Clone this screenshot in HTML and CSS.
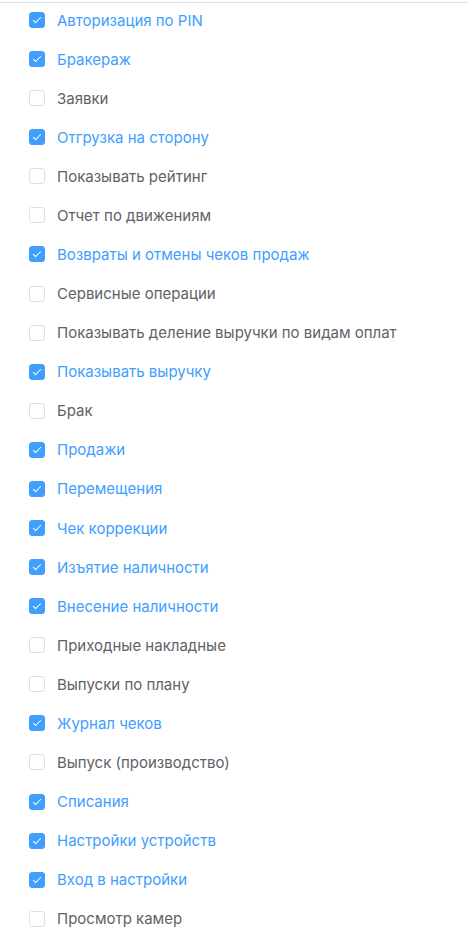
FILE: index.html
```html
<!DOCTYPE html>
<html lang="ru">
<head>
<meta charset="utf-8">
<link rel="stylesheet" href="styles.css">
</head>
<body>
<div class="panel">
  <ul class="list">
    <li class="item checked"><span class="box"></span><span class="label">Авторизация по PIN</span></li>
    <li class="item checked"><span class="box"></span><span class="label">Бракераж</span></li>
    <li class="item"><span class="box"></span><span class="label">Заявки</span></li>
    <li class="item checked"><span class="box"></span><span class="label">Отгрузка на сторону</span></li>
    <li class="item"><span class="box"></span><span class="label">Показывать рейтинг</span></li>
    <li class="item"><span class="box"></span><span class="label">Отчет по движениям</span></li>
    <li class="item checked"><span class="box"></span><span class="label">Возвраты и отмены чеков продаж</span></li>
    <li class="item"><span class="box"></span><span class="label">Сервисные операции</span></li>
    <li class="item"><span class="box"></span><span class="label">Показывать деление выручки по видам оплат</span></li>
    <li class="item checked"><span class="box"></span><span class="label">Показывать выручку</span></li>
    <li class="item"><span class="box"></span><span class="label">Брак</span></li>
    <li class="item checked"><span class="box"></span><span class="label">Продажи</span></li>
    <li class="item checked"><span class="box"></span><span class="label">Перемещения</span></li>
    <li class="item checked"><span class="box"></span><span class="label">Чек коррекции</span></li>
    <li class="item checked"><span class="box"></span><span class="label">Изъятие наличности</span></li>
    <li class="item checked"><span class="box"></span><span class="label">Внесение наличности</span></li>
    <li class="item"><span class="box"></span><span class="label">Приходные накладные</span></li>
    <li class="item"><span class="box"></span><span class="label">Выпуски по плану</span></li>
    <li class="item checked"><span class="box"></span><span class="label">Журнал чеков</span></li>
    <li class="item"><span class="box"></span><span class="label">Выпуск (производство)</span></li>
    <li class="item checked"><span class="box"></span><span class="label">Списания</span></li>
    <li class="item checked"><span class="box"></span><span class="label">Настройки устройств</span></li>
    <li class="item checked"><span class="box"></span><span class="label">Вход в настройки</span></li>
    <li class="item"><span class="box"></span><span class="label">Просмотр камер</span></li>
  </ul>
</div>
</body>
</html>
```
FILE: styles.css
```css
html, body {
  margin: 0;
  padding: 0;
  background: #ffffff;
}
body {
  font-family: Inter, "Noto Sans", sans-serif;
  font-size: 15px;
  color: #606266;
}
.panel {
  margin-top: 2px;
  width: 468px;
  border-top: 1px solid #dcdfe6;
}
.list {
  list-style: none;
  margin: 0;
  padding: 7px 0 0 29px;
  display: flex;
  flex-direction: column;
  gap: 19.09px;
}
.item {
  display: flex;
  align-items: center;
  height: 20px;
  gap: 12px;
}
.box {
  position: relative;
  width: 16px;
  height: 16px;
  box-sizing: border-box;
  border: 1px solid #dcdfe6;
  border-radius: 3px;
  background: #fff;
  flex: none;
}
.item.checked .box {
  background: #409eff;
  border-color: #409eff;
}
.item.checked .box::after {
  content: "";
  position: absolute;
  left: 5px;
  top: 2px;
  width: 3px;
  height: 7px;
  border: 1px solid #fff;
  border-left: 0;
  border-top: 0;
  transform: rotate(45deg);
}
.label {
  line-height: 20px;
  white-space: nowrap;
  padding-top: 1px;
}
.item.checked .label {
  color: #409eff;
}
```
